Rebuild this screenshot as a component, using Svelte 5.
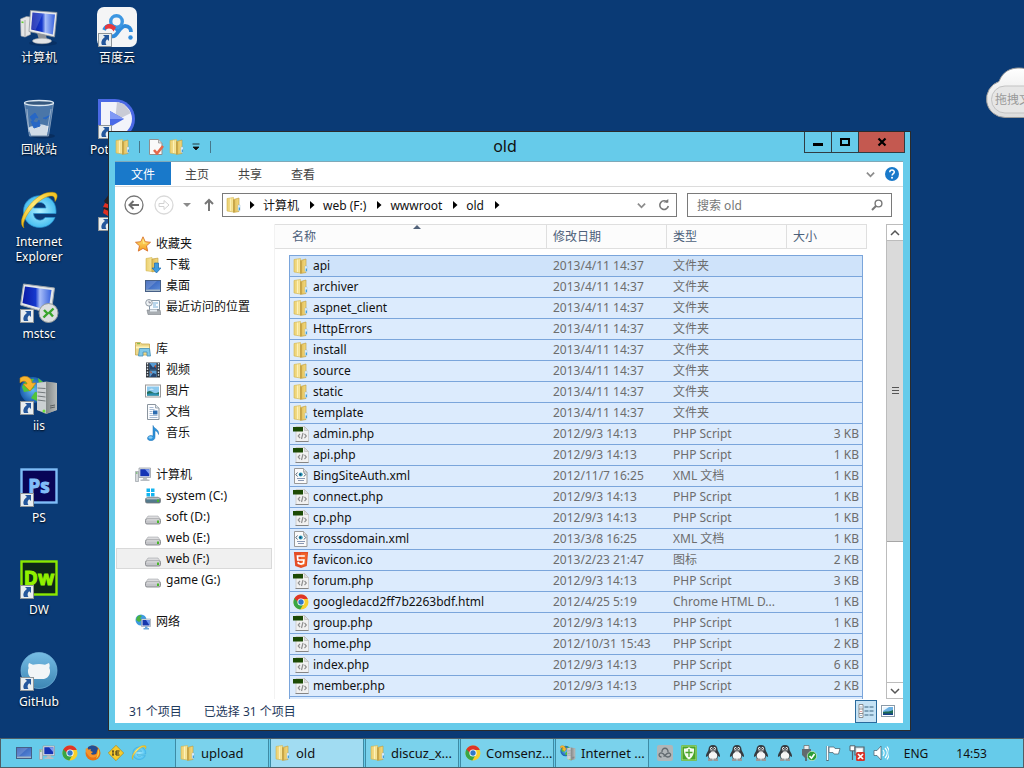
<script>
  const desktopIcons = [
    { icon: 'computer', label: '计算机' },
    { icon: 'recycle', label: '回收站' },
    { icon: 'ie', label: 'Internet Explorer' },
    { icon: 'mstsc', label: 'mstsc', link: true },
    { icon: 'iis', label: 'iis', link: true },
    { icon: 'ps', label: 'PS', link: true },
    { icon: 'dw', label: 'DW', link: true },
    { icon: 'github', label: 'GitHub', link: true },
    { icon: 'baidu', label: '百度云', link: true },
    { icon: 'pot', label: 'PotPlayer', link: true },
    { icon: 'ninja', label: '', link: true }
  ];

  const navGroups = [
    { icon: 'star', label: '收藏夹', items: [['download', '下载'], ['screen', '桌面'], ['recent', '最近访问的位置']] },
    { icon: 'library', label: '库', items: [['video', '视频'], ['picture', '图片'], ['doc', '文档'], ['music', '音乐']] },
    { icon: 'pc', label: '计算机', items: [['sysdrive', 'system (C:)'], ['drive', 'soft (D:)'], ['drive', 'web (E:)'], ['drive', 'web (F:)'], ['drive', 'game (G:)']] },
    { icon: 'network', label: '网络', items: [] }
  ];

  const folders = ['api', 'archiver', 'aspnet_client', 'HttpErrors', 'install', 'source', 'static', 'template'];
  const files = [
    ...folders.map((n) => ['folder', n, '2013/4/11 14:37', '文件夹', '']),
    ['php', 'admin.php', '2012/9/3 14:13', 'PHP Script', '3 KB'],
    ['php', 'api.php', '2012/9/3 14:13', 'PHP Script', '1 KB'],
    ['xml', 'BingSiteAuth.xml', '2012/11/7 16:25', 'XML 文档', '1 KB'],
    ['php', 'connect.php', '2012/9/3 14:13', 'PHP Script', '1 KB'],
    ['php', 'cp.php', '2012/9/3 14:13', 'PHP Script', '1 KB'],
    ['xml', 'crossdomain.xml', '2013/3/8 16:25', 'XML 文档', '1 KB'],
    ['html5', 'favicon.ico', '2013/2/23 21:47', '图标', '2 KB'],
    ['php', 'forum.php', '2012/9/3 14:13', 'PHP Script', '3 KB'],
    ['chrome', 'googledacd2ff7b2263bdf.html', '2012/4/25 5:19', 'Chrome HTML D...', '1 KB'],
    ['php', 'group.php', '2012/9/3 14:13', 'PHP Script', '1 KB'],
    ['php', 'home.php', '2012/10/31 15:43', 'PHP Script', '2 KB'],
    ['php', 'index.php', '2012/9/3 14:13', 'PHP Script', '6 KB'],
    ['php', 'member.php', '2012/9/3 14:13', 'PHP Script', '2 KB'],
    ['php', '', '', '', '']
  ];

  const crumbs = ['计算机', 'web (F:)', 'wwwroot', 'old'];
  const launchers = ['screen', 'pc', 'chrome', 'firefox', 'ietest', 'ie'];
  const tasks = [
    ['folder', 'upload'],
    ['folder', 'old'],
    ['folder', 'discuz_x...'],
    ['chrome', 'Comsenz...'],
    ['iis', 'Internet ...']
  ];
  const tray = ['cloudtray', 'shield', 'qq', 'qq', 'qq', 'qq', 'usb', 'flag', 'netoff', 'sound'];
</script>

{#snippet glyph(name)}
  {#if name === 'folder'}
    <svg viewBox="0 0 16 16"><path d="M1 1.500L7.500.5v14.500L1 14z" fill="url(#gFold)" stroke="#d4b54e" stroke-width=".6"/><path d="M7.500 2.500L13 1v13.500L7.500 15.500z" fill="url(#gFold2)" stroke="#bd9a3a" stroke-width=".6"/><path d="M4.500 1.500v12.500" stroke="#fff6c4" stroke-width=".8"/><path d="M8.200 3v12" stroke="#b8923a" stroke-width=".8"/><path d="M12 8h2v5.500h-2z" fill="#eef8ff" stroke="#8fb4c9" stroke-width=".4"/><path d="M12.700 10.500h1.300v2.500h-1.300z" fill="#3fa0dc"/></svg>
  {:else if name === 'php'}
    <svg viewBox="0 0 16 16"><path d="M3 .5h8.500l4 4v11H3z" fill="#f1f1f1" stroke="#cfcfcf"/><path d="M11.500.5v4h4z" fill="#ddd" stroke="#b5b5b5" stroke-width=".6"/><path d="M2.500 15.500h13" stroke="#858585"/><path d="M0 1h10v4.500H0z" fill="#1c4a05"/><path d="M7 7.800L5.200 10 7 12.200M11.500 7.800l1.800 2.200-1.800 2.200M10 7l-1.500 6" fill="none" stroke="#909090" stroke-width="1.200"/></svg>
  {:else if name === 'xml'}
    <svg viewBox="0 0 16 16"><path d="M1.500.5h9l3.500 3.500v11.500H1.500z" fill="#fafafa" stroke="#999"/><path d="M10.500.5V4H14" fill="#ddd" stroke="#999" stroke-width=".8"/><path d="M4.500 4.500l-1.700 2 1.700 2M11 4.500l1.700 2-1.700 2" fill="none" stroke="#456" stroke-width=".9"/><circle cx="7.700" cy="6.500" r="2" fill="#2c9ab8"/><circle cx="7.300" cy="6.500" r=".9" fill="#173a72"/><path d="M4 10.500h8M5 12.500h6" stroke="#8a98b4"/></svg>
  {:else if name === 'html5'}
    <svg viewBox="0 0 16 16"><path d="M.9 0h14.200L13.800 14 8 16l-5.800-2z" fill="#e44d26"/><path d="M8 1.200h5.900L12.700 13 8 14.700z" fill="#f16529"/><path d="M11.800 4H4.500l.3 4h6.100l-.4 3.300L8 12l-2.600-.7-.2-1.500" fill="none" stroke="#fff" stroke-width="1.700"/></svg>
  {:else if name === 'chrome'}
    <svg viewBox="0 0 16 16"><circle cx="8" cy="8" r="7.500" fill="#f7cf2b"/><path d="M1.400 4.300A7.500 7.500 0 0 0 7.300 15.500L10.500 10 8 8z" fill="#39a544"/><path d="M1.400 4.300L5 10l3-2-1-3z" fill="#39a544"/><path d="M1.400 4.300A7.500 7.500 0 0 1 14.800 5H8L5 8z" fill="#df3526"/><circle cx="8" cy="8" r="3.600" fill="#fff"/><circle cx="8" cy="8" r="2.700" fill="#3178c8"/></svg>
  {:else if name === 'star'}
    <svg viewBox="0 0 16 16"><path d="M8 .8l2.200 4.900 5.300.6-4 3.500 1.200 5.300L8 12.400 3.300 15.100l1.200-5.300-4-3.500 5.300-.6z" fill="url(#gStar)" stroke="#d8702a" stroke-width=".9"/><path d="M8 3l1.300 3.500 3 .5L8 8z" fill="#fff3a0" opacity=".7"/></svg>
  {:else if name === 'download'}
    <svg viewBox="0 0 16 16"><path d="M1 1.500l6-1v14l-6-.7z" fill="url(#gFold)" stroke="#d4b54e" stroke-width=".6"/><path d="M7 2l6-.9v12.800l-6 1z" fill="url(#gFold2)" stroke="#bd9a3a" stroke-width=".6"/><path d="M9.500 6h4v5H16l-4.500 5L7 11h2.500z" fill="#3d9be0" stroke="#1f6aae" stroke-width=".7"/></svg>
  {:else if name === 'screen'}
    <svg viewBox="0 0 16 16"><rect x=".5" y="2.500" width="15" height="11" fill="url(#gScreen)" stroke="#465f86"/><path d="M1 11.500h14V13H1z" fill="#a4b7c8"/><path d="M1 3h11L3 11H1z" fill="#fff" opacity=".18"/></svg>
  {:else if name === 'recent'}
    <svg viewBox="0 0 16 16"><path d="M4.500 1.500h10v9h-10z" fill="#f8fbff" stroke="#8798a8"/><path d="M8 4h5M8 6h3M8 8h5" stroke="#7bb0d8"/><path d="M2 11h13l1 4.500H3z" fill="#a8adb2" stroke="#7c8288" stroke-width=".6"/><path d="M5 10.500h7v2H5z" fill="#e7edf2"/><circle cx="4" cy="3.800" r="3.300" fill="#eef2f4" stroke="#929ca6"/><path d="M4 1.800v2h2" fill="none" stroke="#667" stroke-width=".7"/></svg>
  {:else if name === 'library'}
    <svg viewBox="0 0 16 16"><path d="M.5 3.500v-2h5l1 1.500h8v11H.5z" fill="#edd88a" stroke="#c6a74c" stroke-width=".8"/><path d="M2 2.700h3" stroke="#6db640"/><path d="M1 5.500h13v2H1z" fill="#fff4bb"/><path d="M4.500 7.500h10l1 7.500h-3.500v-4H8v4H3.500z" fill="#80c8e8" stroke="#4691b9" stroke-width=".8"/></svg>
  {:else if name === 'video'}
    <svg viewBox="0 0 16 16"><path d="M1 .5h14v15H1z" fill="#30343c"/><path d="M2.500 1v14M13.500 1v14" stroke="#dce6ec" stroke-width="1.400" stroke-dasharray="1.500 1.300"/><path d="M4.500 1h7v6.500h-7zM4.500 8.500h7V15h-7z" fill="#579bd3"/><path d="M4.500 1l3.500 4.500L11.500 3v4.500h-7zM5 15l3-4 3 1v3z" fill="#26446f"/><path d="M9 4l2-1v3zM5 9l2 1-1 2z" fill="#c0502c"/></svg>
  {:else if name === 'picture'}
    <svg viewBox="0 0 16 16"><rect x=".5" y="2" width="15" height="12" fill="#fff" stroke="#999"/><path d="M2 3.500h12v9H2z" fill="#8cc9ee"/><path d="M2 9c3-2 4-1 6 .5S12 10 14 9v3.500H2z" fill="#23715f"/><path d="M2 11c3-1 7-1 12 0v1.500H2z" fill="#2b8fb5"/><path d="M4 6.500c2-1.500 4-.5 5 0z" fill="#fff"/></svg>
  {:else if name === 'doc'}
    <svg viewBox="0 0 16 16"><path d="M2.500.5h8l3.500 3.500v11.500H2.500z" fill="#fcfdff" stroke="#8a949e"/><path d="M10.500.5V4H14" fill="#dde5ec" stroke="#8a949e" stroke-width=".8"/><path d="M4.500 3.500h4M4.500 5.500h5M4.500 7.500h3M4.500 9.500h3M4.500 11.500h8M4.500 13.500h8" stroke="#8fa8c8" stroke-width=".8"/><path d="M8 6.500h4.500v4H8z" fill="#2d6cb0"/></svg>
  {:else if name === 'music'}
    <svg viewBox="0 0 16 16"><path d="M8 .5c1 3.500 6.500 3.500 5.500 9-.5-2.500-2-3.500-3.500-3.800V12c0 5-8 4.500-7.500 1 .3-2.300 3.500-3.300 5.500-2z" fill="#2d93dc" stroke="#1b6db0" stroke-width=".5"/><ellipse cx="5.500" cy="12.500" rx="2" ry="1.300" fill="#86ccf5"/></svg>
  {:else if name === 'pc'}
    <svg viewBox="0 0 16 16"><path d="M.5 4.500h3v10h-3z" fill="#d5d9dc" stroke="#9aa0a6" stroke-width=".7"/><path d="M1 6h1.500" stroke="#3fa535"/><path d="M4 1h11.500v9.500H4z" fill="#dfe3e8" stroke="#90959d" stroke-width=".7"/><path d="M5.300 2.200h9v7h-9z" fill="#1534b5"/><path d="M10 2.200h4.300v5z" fill="#7d9cf1"/><path d="M8.500 10.500h3l1 2h2v1.500h-9v-1.500h2z" fill="#b8bdc2"/></svg>
  {:else if name === 'drive' || name === 'sysdrive'}
    <svg viewBox="0 0 16 16">
      {#if name === 'sysdrive'}<path d="M1.500.5h3.500v3.500H1.500zM6 .5h3.500v3.500H6zM1.500 5h3.500v3.500H1.500zM6 5h3.500v3.500H6z" fill="#12b4f0"/>{/if}
      <path d={name === 'drive' ? 'M3 7h10l2.500 3.500H.5z' : 'M3 9h10l2.500 2H.5z'} fill={name === 'drive' ? '#dcdcde' : '#a9bac4'} stroke="#96999c" stroke-width=".5"/><rect x=".5" y="10" width="15" height="5" rx="1.500" fill={name === 'drive' ? '#c4c5c9' : '#537a8c'} stroke="#77797d" stroke-width=".8"/><path d="M1.500 10.800h13" stroke="#f6f6f6" stroke-width=".8"/><path d="M12 11.500h2v2.500h-2z" fill="#49b72b"/></svg>
  {:else if name === 'network'}
    <svg viewBox="0 0 16 16"><circle cx="6" cy="6" r="5.500" fill="#3d9be1"/><path d="M2 3c2-2.500 4-2 5-1L5 4l2 2-3 2-3-2zM7 8l3-1-1 4-2 .5z" fill="#4cb33f"/><path d="M6.500 5h9v7.500h-9z" fill="#e7ebef" stroke="#8c98a8" stroke-width=".6"/><path d="M7.500 6h7v5.500h-7z" fill="#1638ad"/><path d="M11 6h3.500v5.500z" fill="#6b93ee"/><path d="M10 12.500h2.500V14H14v1.500H8.500V14H10z" fill="#6aa5d9"/></svg>
  {:else if name === 'firefox'}
    <svg viewBox="0 0 16 16"><circle cx="8" cy="8" r="7.500" fill="#e77316"/><path d="M3 2c3-2.500 8-2 10 1.500L11 9l-5 1-3-4z" fill="#244c91"/><path d="M1 3l2 1.500L6 4.200 5.500 6l2.500 1-2 1.500c1.500 2.500 5 2 6.500-.5.500 5-6.500 6-9 2.500S0 6 1 3z" fill="#f6952b"/><path d="M13 3.500c2.500 4 1 8-2 10 1.500-3 1.500-6 2-10z" fill="#f8cc3a"/></svg>
  {:else if name === 'ietest'}
    <svg viewBox="0 0 16 16"><path d="M8 .3L15.700 8 8 15.700.3 8z" fill="#f8cc2c" stroke="#a9851d" stroke-width=".7"/><path d="M5 6v4M4 6h2M4 10h2M11.500 6H8v4h3.500M8 8h3" fill="none" stroke="#3a3220" stroke-width="1"/></svg>
  {:else if name === 'cloudtray'}
    <svg viewBox="0 0 16 16"><rect width="16" height="16" rx="2" fill="#b0b6b8"/><path d="M4.500 12c-3.500 0-3-4.500 0-4 3 .6 3 3.500 6 4 4 0 4-4 1-4-2 0-3 2.500-5 3.500M5 7c-.5-5 6.500-5 6 0" fill="none" stroke="#626b70" stroke-width="1.300"/></svg>
  {:else if name === 'shield'}
    <svg viewBox="0 0 16 16"><rect width="16" height="16" rx="1.500" fill="#4aa32a"/><rect x="1" y="1" width="14" height="14" fill="none" stroke="#a8df86"/><path d="M3 3.500c2 0 4-.5 5-1.500 1 1 3 1.500 5 1.500C13.500 9 11 13 8 14.500 5 13 2.500 9 3 3.500z" fill="#f5fbef"/><path d="M8 4v8M4.500 7.500h7" stroke="#4aa32a" stroke-width="1.300"/></svg>
  {:else if name === 'qq'}
    <svg viewBox="0 0 16 16"><path d="M8 0c3 0 4.500 2 4.500 4.500C13 7 15.500 9 15 12l-2-1-1 3.500H4L3 11l-2 1C.5 9 3 7 3.500 4.500 3.500 2 5 0 8 0z" fill="#353b40"/><ellipse cx="8" cy="10.800" rx="4.300" ry="4" fill="#f6f6f6"/><ellipse cx="6.400" cy="3.500" rx="1.200" ry="1.500" fill="#fff"/><ellipse cx="9.600" cy="3.500" rx="1.200" ry="1.500" fill="#fff"/><circle cx="6.700" cy="3.700" r=".6"/><circle cx="9.300" cy="3.700" r=".6"/><path d="M4.500 5.500h7L8 7.500z" fill="#b6b6b6"/><path d="M3 13.500h4.500V16H3zM8.500 13.500H13V16H8.500z" fill="#999"/></svg>
  {:else if name === 'usb'}
    <svg viewBox="0 0 16 16"><path d="M3 .5h5v4H3z" fill="#eee" stroke="#666" stroke-width=".7"/><path d="M1 4h9v6l-2 3H4L1 10z" fill="#626a6e"/><path d="M5 13v3" stroke="#555" stroke-width="1.500"/><circle cx="11" cy="11" r="4.700" fill="#2a9c35" stroke="#d6f2d6" stroke-width=".7"/><path d="M8.500 11l2 2.200 3-4.200" fill="none" stroke="#fff" stroke-width="1.700"/></svg>
  {:else if name === 'flag'}
    <svg viewBox="0 0 16 16"><path d="M2.500 1v15" stroke="#536b76" stroke-width="2.400"/><path d="M2.500 1v14" stroke="#fff" stroke-width="1.400"/><path d="M4 2h5l1 1.500h5L13.500 9H9L8 7.500H4z" fill="#fff" stroke="#536b76" stroke-width=".8"/></svg>
  {:else if name === 'netoff'}
    <svg viewBox="0 0 16 16"><path d="M1 .8h5v5H1z" fill="#fff" stroke="#54636b"/><path d="M3.500 6v9M6 2h9v8H6z" fill="#c5dce6" stroke="#54636b" stroke-width="1.200"/><path d="M7.500 3.500h6v4h-6z" fill="#fff"/><rect x="7" y="7" width="9" height="9" rx="1.500" fill="#d6352b"/><path d="M9 9l5 5M14 9l-5 5" stroke="#fff" stroke-width="1.700"/></svg>
  {:else if name === 'sound'}
    <svg viewBox="0 0 16 16"><path d="M1 5.500h3L8 1v14l-4-4.500H1z" fill="#fff" stroke="#536b76" stroke-width=".8"/><path d="M10 5c1.500 2 1.500 4 0 6M12 3c3 3 3 7 0 10M14 1.500c3 4 3 9 0 13" fill="none" stroke="#fff" stroke-width="1.100"/></svg>
  {:else if name === 'computer' || name === 'mstsc'}
    <svg viewBox="0 0 40 40">
      {#if name === 'computer'}
        <ellipse cx="24" cy="36" rx="14" ry="3" fill="#062a58" opacity=".6"/><path d="M1.500 12l6-2.500 4 .5v17.500l-5.500 2.500-4-1z" fill="#e4e5e6" stroke="#9fa3a8" stroke-width=".6"/><path d="M6 13v16.500" fill="none" stroke="#aaa"/><path d="M2.500 15l2 .5" stroke="#64d030" stroke-width="1.500"/><path d="M18 26l9 2 1 5h-8z" fill="#8e9398"/><ellipse cx="23" cy="34" rx="9.500" ry="2.700" fill="#e2e4e6" stroke="#a4a7aa" stroke-width=".6"/><path d="M11.500 3.500L38 5.500 35.500 30 10 24.500z" fill="#e8eaec" stroke="#8e949b" stroke-width=".8"/><path d="M13.500 5.500l22.500 2L33.800 27.500 12.200 22.500z" fill="url(#gMon)"/><path d="M13.500 5.500h11l-8 17.500-4-1z" fill="#fff" opacity=".16"/>
      {:else}
        <path d="M4.500 1l31 4-3.500 26L1.500 22z" fill="#e4e7e9" stroke="#a0a6ab"/><path d="M6 3.500l26.500 3.500-3 20.500L3.500 20z" fill="url(#gMon)"/><circle cx="29.500" cy="30" r="9.500" fill="#dcdfdf" stroke="#929999"/><path d="M25 27l3.500 3.500-4 4M34.500 25.500l-4 4 3.500 4" fill="none" stroke="#39a52c" stroke-width="2.400"/>
      {/if}
    </svg>
  {:else if name === 'recycle'}
    <svg viewBox="0 0 40 40"><ellipse cx="24" cy="37" rx="12" ry="2.500" fill="#06254f" opacity=".6"/><path d="M5.500 4h29L29.500 37h-19z" fill="#7fa7d2" opacity=".55" stroke="#dbe7f2" stroke-width="1"/><path d="M9.500 29c3-3 6-1 9-3s8 1 11 1l-1.500 9.500h-16z" fill="#e9eef2" opacity=".85"/><ellipse cx="20" cy="4" rx="14.500" ry="2.500" fill="#36597f" stroke="#dce8f2" stroke-width="1.300"/><path d="M11 18l5-4 3 5-2-1-3 4zM12 22l6 2 2-3 1 6-6 2zM24 19l3 1 4-4" fill="#2767c5" stroke="#2767c5"/><path d="M8 10l2 23M32 10l-4 23" stroke="#fff" opacity=".4"/></svg>
  {:else if name === 'ie'}
    <svg viewBox="0 0 40 40"><path d="M37 22.500H14.500c.5 8 9.500 8 11.500 4h10C30 42 4.500 39 4.500 20.500S30 0 35.500 13c1.300 3 1.700 6 1.500 9.500zM14.500 17H27c-.5-7.500-12-7.500-12.500 0z" fill="url(#gIe)" stroke="#2b94d2" stroke-width=".7"/><path d="M5 37C-5 30 17-2 35 1.500c5 1 3 6 1 9 0-4-1-6-5-5.500C19 6.500 1 29 5 37z" fill="url(#gRing)" stroke="#bf9000" stroke-width=".5"/></svg>
  {:else if name === 'iis'}
    <svg viewBox="0 0 40 40"><circle cx="14" cy="15" r="13" fill="url(#gGlobe)"/><path d="M3 12c2-6 9-9 12-8l-3 5 4 3-5 4-6 1zM16 17l7 1-5 8-6-3zM19 3l5 4-4 2z" fill="#51c43b"/><path d="M1 3c6-4 12 0 12 5h4l-6 8-7-7h4c0-3-4-4-7-1z" fill="#f8b52f" stroke="#b97812" stroke-width=".6"/><path d="M18 8l9-1.500L38 8v27l-11 4-9-4z" fill="#9a9fa0"/><path d="M18 8l9-1v31l-9-3z" fill="#ccd0d2"/><path d="M27 7l11 1v27l-11 4z" fill="url(#gMetal)"/><path d="M18.500 13l8 .5M18.500 17l8 .8M18.500 21l8 1M18.500 25l8 1" stroke="#73797c"/><path d="M31 31l5-1M31 33l5-1" stroke="#5c6162"/><circle cx="25" cy="36" r="1.500" fill="#6be33a"/></svg>
  {:else if name === 'ps' || name === 'dw'}
    <svg viewBox="0 0 40 40"><rect x="2.500" y="2.500" width="35" height="33" fill={name === 'ps' ? '#080557' : '#0d2719'} stroke={name === 'ps' ? '#7ebcf7' : '#8be800'} stroke-width="2.400"/><text class="logo" x="20" y="26" text-anchor="middle" fill={name === 'ps' ? '#82bef8' : '#91f100'} stroke={name === 'ps' ? '#82bef8' : '#91f100'}>{name === 'ps' ? 'Ps' : 'Dw'}</text></svg>
  {:else if name === 'github'}
    <svg viewBox="0 0 40 40"><circle cx="20" cy="19.500" r="18" fill="url(#gGit)" stroke="#75b5db" stroke-width=".7"/><path d="M10 12l4 1.800c4-1 8-1 12 0l4-1.800c1 2 .8 3.500.3 5 1.700 3 .7 10-5.300 11H15c-6-1-7-8-5.300-11-.5-1.500-.7-3 .3-5z" fill="#f1f5f7"/></svg>
  {:else if name === 'baidu'}
    <svg viewBox="0 0 40 40"><rect width="40" height="40" rx="7" fill="#f4f5f6"/><path d="M14 29c6 3 8-10 14-10 4 0 6 3 6 6" fill="none" stroke="#2f8bdb" stroke-width="3.800"/><path d="M7 23c3-6 10-6 14 1" fill="none" stroke="#2f8bdb" stroke-width="3.800"/><circle cx="19.500" cy="14.500" r="5.800" fill="none" stroke="#3d97e2" stroke-width="3.400"/><path d="M8 19c4-3.500 8-2 11 1.500l-2.500 4c-1-3-4.500-4-8.500-2z" fill="#e7393d"/><circle cx="33.500" cy="30.500" r="2.200" fill="#2f8bdb"/></svg>
  {:else if name === 'pot'}
    <svg viewBox="0 0 40 40"><path d="M1 0h17a20 20 0 0 1 0 40H1z" fill="#4b69e5"/><path d="M4 3h14a17 17 0 0 1 0 34H4z" fill="#f2f3fa"/><path d="M20 3l7 2 7 9-16 8z" fill="#c9cbd6"/><path d="M13 12l14 8-14 8z" fill="#4969e7"/><path d="M13 12l14 8H13z" fill="#8199f5"/></svg>
  {:else if name === 'ninja'}
    <svg viewBox="0 0 40 40"><path d="M13 2l-6 8 2 3-3 5 6 7 8-1 10-22z" fill="#252126"/><path d="M8 12l5 2-2 3-5-1zM7 18l7 3-3 4-5-3z" fill="#df3023"/></svg>
  {/if}
{/snippet}

{#snippet chevron()}
  <svg class="chev" viewBox="0 0 10 10"><path d="M1 3l4 4 4-4" fill="none" stroke="currentColor" stroke-width="2"/></svg>
{/snippet}

<svg class="defs" aria-hidden="true">
  <defs>
    <linearGradient id="gFold"><stop offset="0" stop-color="#ebd072"/><stop offset="1" stop-color="#f8e79d"/></linearGradient>
    <linearGradient id="gFold2"><stop offset="0" stop-color="#dfbc55"/><stop offset="1" stop-color="#f3d981"/></linearGradient>
    <linearGradient id="gStar" x2="0" y2="1"><stop offset="0" stop-color="#fff07a"/><stop offset="1" stop-color="#f49b20"/></linearGradient>
    <linearGradient id="gScreen" x2="1" y2="1"><stop offset="0" stop-color="#2955b2"/><stop offset="1" stop-color="#5f8fdc"/></linearGradient>
    <linearGradient id="gMon"><stop offset="0" stop-color="#0a19a5"/><stop offset=".45" stop-color="#1538cc"/><stop offset=".6" stop-color="#a7bdf8"/><stop offset="1" stop-color="#3560dc"/></linearGradient>
    <radialGradient id="gIe"><stop offset="0" stop-color="#b2f1ff"/><stop offset="1" stop-color="#48bff1"/></radialGradient>
    <linearGradient id="gRing" x1="1" x2="0" y2="1"><stop offset="0" stop-color="#f3be17"/><stop offset=".5" stop-color="#ffe978"/><stop offset="1" stop-color="#edb50f"/></linearGradient>
    <radialGradient id="gGlobe"><stop offset="0" stop-color="#66b9f4"/><stop offset="1" stop-color="#1a5dad"/></radialGradient>
    <linearGradient id="gMetal"><stop offset="0" stop-color="#838888"/><stop offset="1" stop-color="#b8bcbb"/></linearGradient>
    <linearGradient id="gGit" x2="0" y2="1"><stop offset="0" stop-color="#76bde5"/><stop offset="1" stop-color="#3d86b4"/></linearGradient>
    <linearGradient id="gCloud" x2="0" y2="1"><stop offset="0" stop-color="#fff"/><stop offset="1" stop-color="#dcdcdc"/></linearGradient>
  </defs>
</svg>

<div class="screen">
  <main class="desktop">
    <div class="shortcuts">
      {#each desktopIcons as d}
        <button class="shortcut">
          <span class="art">
            {@render glyph(d.icon)}
            {#if d.link}
              <svg class="arrow" viewBox="0 0 14 14"><rect x=".5" y=".5" width="13" height="13" fill="#e9eef0" stroke="#8e9498"/><path d="M5 2h6v6L9.200 6.200C7 8 7.500 10.500 8.500 12H4C2.500 9 4 6 7 4z" fill="#24579c"/></svg>
            {/if}
          </span>
          <span class="caption">{d.label}</span>
        </button>
      {/each}
    </div>

    <div class="cloud">
      <svg viewBox="0 0 76 52"><path d="M20 50.500a18.500 18.500 0 0 1-6-36C18 4 26 1 34 1c10 0 17 5 20 13a18.500 18.500 0 0 1 2 36.500z" fill="url(#gCloud)" stroke="#9a9a9a"/><path d="M20 46a13.500 13.500 0 0 1 0-27h40v27z" fill="#e6e6e6" stroke="#c3c3c3"/></svg>
      <span>拖拽文</span>
    </div>

    <section class="window">
      <header class="titlebar">
        <span class="i16">{@render glyph('folder')}</span>
        <i class="bar"></i>
        <button class="i16" aria-label="属性"><svg viewBox="0 0 16 16"><path d="M1.500.5h9L14 4v11.500H1.500z" fill="#fafafa" stroke="#8f8f8f"/><path d="M10.500.5V4H14" fill="#ddd" stroke="#8f8f8f" stroke-width=".7"/><path d="M6 11l3 3.500L15 7" fill="none" stroke="#e5694b" stroke-width="2.600"/></svg></button>
        <button class="i16" aria-label="新建文件夹">{@render glyph('folder')}</button>
        <button class="more" aria-label="自定义"><svg viewBox="0 0 8 8"><path d="M.5 1h7M1 4h6L4 7z" fill="#111" stroke="#111" stroke-width=".8"/></svg></button>
        <i class="bar"></i>
        <h1>old</h1>
        <div class="controls">
          <button aria-label="最小化"><svg viewBox="0 0 12 12"><path d="M1 8.500h10" stroke="#000" stroke-width="3"/></svg></button>
          <button aria-label="最大化"><svg viewBox="0 0 12 12"><path d="M2 3h8v6H2z" fill="none" stroke="#000" stroke-width="2"/></svg></button>
          <button class="close" aria-label="关闭"><svg viewBox="0 0 12 12"><path d="M2.500 2.500l7 7M9.500 2.500l-7 7" stroke="#000" stroke-width="2.200"/></svg></button>
        </div>
      </header>

      <div class="content">
        <nav class="tabs">
          <button class="file">文件</button>
          <button>主页</button>
          <button>共享</button>
          <button>查看</button>
          <span class="grow"></span>
          <button class="plain" aria-label="展开功能区">{@render chevron()}</button>
          <button class="help" aria-label="帮助"><svg viewBox="0 0 14 14"><circle cx="7" cy="7" r="7" fill="#1979ca"/><path d="M4.800 5.300c0-3 4.500-2.800 4.500-.3 0 1.700-2.200 1.700-2.200 3.600" fill="none" stroke="#fff" stroke-width="1.500"/><circle cx="7" cy="10.700" r="1" fill="#fff"/></svg></button>
        </nav>

        <div class="location">
          <button class="round" aria-label="后退"><svg viewBox="0 0 20 20"><circle cx="10" cy="10" r="9" fill="none" stroke="#777" stroke-width="1.300"/><path d="M15 10H6M9.500 6L5.500 10l4 4" fill="none" stroke="#6d6d6d" stroke-width="2"/></svg></button>
          <button class="round" aria-label="前进"><svg viewBox="0 0 20 20"><circle cx="10" cy="10" r="9" fill="none" stroke="#dadada" stroke-width="1.300"/><path d="M5 8.500h5V5.500l5 4.500-5 4.500v-3H5z" fill="none" stroke="#d2d2d2"/></svg></button>
          <button class="tiny" aria-label="最近位置"><svg viewBox="0 0 8 8"><path d="M0 2h8L4 6z" fill="#8b8b8b"/></svg></button>
          <button class="up" aria-label="上移"><svg viewBox="0 0 12 14"><path d="M6 13V2M2 6l4-4 4 4" fill="none" stroke="#777" stroke-width="2"/></svg></button>
          <div class="address">
            <span class="i16">{@render glyph('folder')}</span>
            <svg class="tri" viewBox="0 0 5 8"><path d="M0 0l4.500 4L0 8z"/></svg>
            {#each crumbs as c}
              <a href="#{c}">{c}</a>
              <svg class="tri" viewBox="0 0 5 8"><path d="M0 0l4.500 4L0 8z"/></svg>
            {/each}
            <span class="grow"></span>
            <button class="plain" aria-label="历史">{@render chevron()}</button>
            <button class="refresh" aria-label="刷新"><svg viewBox="0 0 12 12"><path d="M9.500 3.500A4.300 4.300 0 1 0 10.300 7" fill="none" stroke="#777" stroke-width="1.600"/><path d="M5.500 3.500h4.800V0z" fill="#777"/></svg></button>
          </div>
          <label class="search">
            <input type="text" placeholder="搜索 old" aria-label="搜索" />
            <svg viewBox="0 0 12 12"><circle cx="7.500" cy="4.500" r="3.400" fill="none" stroke="#777" stroke-width="1.400"/><path d="M5 7L1 11" stroke="#777" stroke-width="2"/></svg>
          </label>
        </div>

        <div class="body">
          <aside class="tree">
            {#each navGroups as g}
              <ul>
                <li><span class="i16">{@render glyph(g.icon)}</span>{g.label}</li>
                {#each g.items as [icon, label]}
                  <li class="child" class:current={label === 'web (F:)'}><span class="i16">{@render glyph(icon)}</span>{label}</li>
                {/each}
              </ul>
            {/each}
          </aside>

          <div class="listing">
            <table>
              <thead>
                <tr><th class="name">名称<svg class="sort" viewBox="0 0 8 4"><path d="M0 4l4-4 4 4z" fill="#52637a"/></svg></th><th>修改日期</th><th>类型</th><th class="size">大小</th></tr>
              </thead>
              <tbody>
                {#each files as [icon, name, date, type, size]}
                  <tr>
                    <td class="name"><span class="i16">{@render glyph(icon)}</span>{name}</td>
                    <td>{date}</td>
                    <td>{type}</td>
                    <td class="size">{size}</td>
                  </tr>
                {/each}
              </tbody>
            </table>
          </div>

          <div class="scrollbar">
            <button aria-label="向上滚动"><svg viewBox="0 0 10 10"><path d="M1 7l4-4 4 4" fill="none" stroke="#555" stroke-width="1.500"/></svg></button>
            <div class="track"><div class="thumb"><i></i></div></div>
            <button aria-label="向下滚动"><svg viewBox="0 0 10 10"><path d="M1 3l4 4 4-4" fill="none" stroke="#555" stroke-width="1.500"/></svg></button>
          </div>
        </div>

        <footer class="status">
          <span>31 个项目</span>
          <span>已选择 31 个项目</span>
          <span class="grow"></span>
          <div class="views">
            <button class="view on" aria-label="详细信息"><svg viewBox="0 0 16 14"><path d="M1 .5h4v13H1zM1 5h4M1 9.500h4" fill="#fff" stroke="#777" stroke-width=".8"/><path d="M6.500 3h4M11.500 3h4M6.500 7h4M11.500 7h4M6.500 11h4M11.500 11h4" stroke="#39627f"/><path d="M2.500 2.500h1v1h-1zM2.500 11h1v1h-1z" fill="#3569a0"/><path d="M2.500 7h1v1h-1z" fill="#b44"/></svg></button>
            <button class="view" aria-label="大图标"><svg viewBox="0 0 14 14"><rect x=".5" y="1.500" width="13" height="11" fill="#fff" stroke="#8a9aa8"/><path d="M2 3h10v8H2z" fill="#6ab1e4"/><path d="M2 3h6L2 7z" fill="#e9f5fd"/><path d="M2 8c4-1 7 0 10-2v5H2z" fill="#1c6a53"/><path d="M2 9.500h10V11H2z" fill="#153f8c"/></svg></button>
          </div>
        </footer>
      </div>
    </section>
  </main>

  <footer class="taskbar">
    <div class="launch">
      {#each launchers as l}<button class="i16" aria-label={l}>{@render glyph(l)}</button>{/each}
    </div>
    <div class="tasks">
      {#each tasks as [icon, label]}
        <button class="task" class:active={label === 'old'}><span class="i16">{@render glyph(icon)}</span>{label}</button>
      {/each}
    </div>
    <div class="tray">
      {#each tray as t}<span class="i16">{@render glyph(t)}</span>{/each}
    </div>
    <span class="lang">ENG</span>
    <time>14:53</time>
  </footer>
</div>

<style>
  :global(body) { margin: 0; background: #0a3a75; }
  .screen, .screen button, .screen input {
    font-family: "Noto Sans", "Noto Sans CJK SC", sans-serif;
    font-size: 12px;
  }
  .screen { display: grid; grid-template-rows: 1fr 30px; height: 100vh; overflow: hidden; color: #111; line-height: 15px; }
  button { border: 0; padding: 0; margin: 0; background: none; color: inherit; display: flex; align-items: center; justify-content: center; }
  svg { display: block; }
  .defs { position: absolute; width: 0; height: 0; }
  .grow { flex: 1; }
  .i16 { width: 16px; height: 16px; flex: none; display: block; }
  .i16 :global(svg) { width: 16px; height: 16px; }

  .desktop { position: relative; min-height: 0; background: #0a3a75; overflow: hidden; }
  .shortcuts { display: grid; grid-auto-flow: column; grid-template-rows: repeat(8, 92px); grid-auto-columns: 78px; padding-top: 7px; justify-content: start; }
  .shortcut { flex-direction: column; justify-content: flex-start; gap: 3px; color: #fff; line-height: 15px; text-shadow: 0 1px 2px #000; }
  .art { position: relative; width: 40px; height: 40px; flex: none; }
  .art :global(svg) { width: 40px; height: 40px; }
  .art .arrow { position: absolute; left: 1px; bottom: 0; width: 14px; height: 14px; }
  .logo { font-family: "Open Sans", "Noto Sans", sans-serif; font-size: 19px; font-weight: 700; stroke-width: 1px; text-shadow: none; }
  .caption { width: 70px; text-align: center; }

  .cloud { position: absolute; right: -37px; top: 67px; width: 76px; }
  .cloud span { position: absolute; left: 10px; top: 25px; color: #999; white-space: nowrap; }

  .window { position: absolute; inset: 131px 113px 7px 108px; display: flex; flex-direction: column; background: #66cbea; border: 1px solid #2b2b2b; padding: 0 7px 7px 6px; }
  .titlebar { position: relative; display: flex; align-items: center; height: 29px; gap: 5px; flex: none; }
  .bar { width: 1px; height: 12px; background: #46788c; margin: 0 3px; }
  .more { width: 12px; height: 16px; }
  .more svg { width: 8px; height: 8px; }
  h1 { position: absolute; left: 0; right: 8px; top: 0; margin: 0; font-size: 16px; font-weight: 400; line-height: 28px; text-align: center; pointer-events: none; }
  .controls { position: absolute; right: -2px; top: 0; display: flex; border: 1px solid #303c42; border-top: 0; }
  .controls button { width: 27px; height: 20px; border-right: 1px solid #303c42; }
  .controls svg { width: 12px; height: 12px; }
  .controls .close { width: 45px; border-right: 0; background: #c45950; }

  .content { flex: 1; min-height: 0; display: flex; flex-direction: column; background: #fff; border-top: 1px solid #7fa9b8; }
  .tabs { display: flex; height: 24px; border-bottom: 1px solid #dcdcdc; flex: none; padding-right: 4px; color: #444; }
  .tabs .file { width: 56px; height: 23px; background: #1979ca; color: #fff; }
  .tabs button:not(:first-child) { margin-right: 1px; padding: 0 14px; }
  .tabs button.plain, .tabs button.help { padding: 0; width: 14px; margin-right: 0; }
  .tabs button.plain { margin-right: 8px; }
  .help svg { width: 14px; height: 14px; }
  .plain { color: #8c8c8c; }
  .chev { width: 9px; height: 9px; }

  .location { display: flex; align-items: center; gap: 10px; padding: 6px 11px 7px 9px; flex: none; }
  .round svg { width: 20px; height: 20px; }
  .tiny { width: 8px; margin-left: -1px; }
  .tiny svg { width: 8px; height: 8px; }
  .up { width: 12px; margin: 0 -3px 0 2px; }
  .up svg { width: 12px; height: 14px; }
  .address { flex: 1; min-width: 0; display: flex; align-items: center; height: 22px; border: 1px solid #7a7a7a; padding: 0 6px 0 3px; gap: 8px; }
  .address a { color: inherit; text-decoration: none; white-space: nowrap; margin-right: 3px; }
  .tri { width: 5px; height: 8px; flex: none; }
  .refresh { width: 12px; margin-left: 4px; }
  .refresh svg { width: 12px; height: 12px; }
  .search { display: flex; align-items: center; flex: 0 1 204px; height: 24px; box-sizing: border-box; border: 1px solid #7a7a7a; padding: 0 8px 0 9px; }
  .search input { flex: 1; min-width: 0; border: 0; outline: 0; padding: 0; background: none; }
  .search input::placeholder { color: #777; opacity: 1; }
  .search svg { width: 12px; height: 12px; }

  .body { flex: 1; min-height: 0; display: flex; }
  .tree { flex: none; width: 159px; border-right: 1px solid #f2f2f2; padding-top: 9px; overflow: hidden; }
  ul { list-style: none; margin: 0 0 21px; padding: 0 2px 0 1px; }
  li { display: flex; align-items: center; gap: 5px; height: 21px; padding-left: 19px; white-space: nowrap; box-sizing: border-box; }
  li.child { padding-left: 29px; }
  li.current { background: #f0f0f0; box-shadow: inset 0 0 0 1px #d9d9d9; }

  .listing { flex: 1; min-width: 0; overflow: hidden; padding-right: 19px; }
  table, thead, tbody { display: block; }
  tr { display: flex; }
  th { position: relative; box-sizing: border-box; width: 120px; height: 25px; padding: 4px 6px; line-height: 16px; text-align: left; font-weight: 400; color: #4c607a; background: #fcfcfc; border: solid #dfdfdf; border-width: 1px 1px 1px 0; }
  th.name { flex: 1; padding-left: 17px; }
  th.size { width: 80px; }
  .sort { position: absolute; left: 50%; margin-left: 2px; top: 0; width: 8px; height: 4px; }
  tbody { margin: 6px 4px 0 14px; border: 1px solid #7aa5db; border-width: 1px 1px 0; }
  tbody tr { height: 20px; background: #dcebfd; border-bottom: 1px solid #7aa5db; }
  tbody tr:first-child { background: #cfe3fa; }
  td { box-sizing: border-box; width: 120px; padding: 0 6px; line-height: 20px; color: #6d6d6d; white-space: nowrap; }
  td.name { flex: 1; display: flex; align-items: center; gap: 4px; padding: 0 0 0 3px; color: #111; }
  td.size { width: 75px; padding-right: 3px; text-align: right; }

  .scrollbar { width: 17px; flex: none; display: flex; flex-direction: column; box-sizing: border-box; border: 1px solid #bcbcbc; border-right: 0; }
  .scrollbar button { height: 15px; flex: none; }
  .scrollbar svg { width: 10px; height: 10px; }
  .track { flex: 1; border: solid #bcbcbc; border-width: 1px 0; }
  .thumb { height: 68%; background: #dadada; border-bottom: 1px solid #a6a6a6; display: flex; align-items: center; justify-content: center; }
  .thumb i { width: 7px; height: 7px; background: repeating-linear-gradient(#555 0 1px, transparent 1px 3px); }

  .status { height: 24px; flex: none; display: flex; align-items: center; gap: 22px; padding: 0 4px 0 14px; color: #1e395b; }
  .views { display: flex; }
  .view { width: 22px; height: 23px; box-sizing: border-box; }
  .view svg { width: 14px; height: 14px; }
  .view.on { border: 1px solid #2a6a9c; background: #c6e3f5; }
  .view.on svg { width: 16px; }

  .taskbar { display: flex; align-items: stretch; box-sizing: border-box; background: #66cbea; border: 1px solid #4e5f68; }
  .launch { display: flex; align-items: center; gap: 7px; padding: 0 28px 0 15px; }
  .tasks { display: flex; gap: 1px; }
  .screen .task { width: 94px; box-sizing: border-box; justify-content: flex-start; gap: 5px; padding-left: 4px; font-size: 13px; white-space: nowrap; background: #7ad2ec; border: 1px solid #3e8ba5; border-width: 0 1px; }
  .screen .task.active { background: #a1dcf2; }
  .tray { display: flex; align-items: center; gap: 8px; padding: 0 12px 0 8px; margin-right: auto; }
  .lang, time { align-self: center; }
  time { margin: 0 36px 0 28px; }
</style>
